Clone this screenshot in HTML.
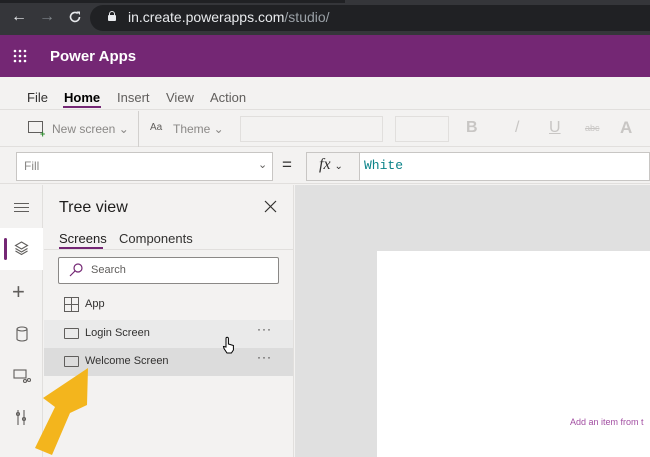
<!DOCTYPE html>
<html><head><style>
*{box-sizing:border-box;margin:0;padding:0}
body{width:650px;height:457px;overflow:hidden;position:relative;font-family:"Liberation Sans",sans-serif;background:#f3f2f1}
.a{position:absolute}
</style></head><body>
<div class="a" style="left:0;top:0;width:650px;height:35px;background:#35363a"></div>
<div class="a" style="left:0;top:0;width:345px;height:3px;background:#202124"></div>
<div class="a" style="left:90px;top:5px;width:600px;height:26px;border-radius:13px;background:#202124"></div>
<div class="a" style="left:11px;top:8px;color:#e8eaed;font-size:16px">&#8592;</div>
<div class="a" style="left:39px;top:8px;color:#80868b;font-size:16px">&#8594;</div>
<svg class="a" style="left:68px;top:10px" width="14" height="14" viewBox="0 0 14 14"><path d="M11.5 7A4.5 4.5 0 1 1 9.8 3.4" fill="none" stroke="#e8eaed" stroke-width="1.6"/><path d="M8.5 1.5h3.5v3.5z" fill="#e8eaed"/></svg>
<div class="a" style="left:108px;top:15px;width:8px;height:6px;background:#e8eaed;border-radius:1px"></div>
<div class="a" style="left:109px;top:11px;width:6px;height:6px;border:1.5px solid #e8eaed;border-radius:3px 3px 0 0"></div>
<div class="a" style="left:128px;top:9px;color:#e8eaed;font-size:14px">in.create.powerapps.com<span style="color:#9aa0a6">/studio/</span></div>
<div class="a" style="left:0;top:35px;width:650px;height:42px;background:#742774"></div>
<svg class="a" style="left:13px;top:49px" width="16" height="14"><g fill="#fff"><circle cx="2" cy="2" r="1.3"/><circle cx="7" cy="2" r="1.3"/><circle cx="12" cy="2" r="1.3"/><circle cx="2" cy="7" r="1.3"/><circle cx="7" cy="7" r="1.3"/><circle cx="12" cy="7" r="1.3"/><circle cx="2" cy="12" r="1.3"/><circle cx="7" cy="12" r="1.3"/><circle cx="12" cy="12" r="1.3"/></g></svg>
<div class="a" style="left:50px;top:48px;color:#fff;font-size:15px;font-weight:bold">Power Apps</div>
<div class="a" style="left:0;top:77px;width:650px;height:33px;background:#f3f2f1;border-bottom:1px solid #e1dfdd"></div>
<div class="a" style="top:90px;left:27px;font-size:13px;color:#323130">File</div>
<div class="a" style="top:90px;left:64px;font-size:13px;color:#000;font-weight:bold">Home</div>
<div class="a" style="top:106px;left:63px;width:38px;height:2px;background:#742774"></div>
<div class="a" style="top:90px;left:117px;font-size:13px;color:#605e5c">Insert</div>
<div class="a" style="top:90px;left:166px;font-size:13px;color:#605e5c">View</div>
<div class="a" style="top:90px;left:210px;font-size:13px;color:#605e5c">Action</div>
<div class="a" style="left:0;top:111px;width:650px;height:36px;background:#f3f2f1;border-bottom:1px solid #e1dfdd"></div>
<div class="a" style="left:28px;top:121px;width:15px;height:12px;border:1.3px solid #605e5c"></div>
<div class="a" style="left:40px;top:129px;color:#2c8b2c;font-size:9px;font-weight:bold">+</div>
<div class="a" style="left:52px;top:122px;font-size:12px;color:#8a8886">New screen ⌄</div>
<div class="a" style="left:138px;top:111px;width:1px;height:36px;background:#d2d0ce"></div>
<div class="a" style="left:150px;top:122px;font-size:10px;color:#605e5c">Aa</div>
<div class="a" style="left:173px;top:122px;font-size:12px;color:#8a8886">Theme ⌄</div>
<div class="a" style="left:240px;top:116px;width:143px;height:26px;border:1px solid #e1dfdd;background:#f3f2f1"></div>
<div class="a" style="left:395px;top:116px;width:54px;height:26px;border:1px solid #e1dfdd"></div>
<div class="a" style="left:466px;top:119px;font-size:16px;color:#c8c6c4;font-weight:bold">B</div>
<div class="a" style="left:515px;top:119px;font-size:16px;color:#c8c6c4">/</div>
<div class="a" style="left:549px;top:119px;font-size:16px;color:#c8c6c4;text-decoration:underline">U</div>
<div class="a" style="left:585px;top:123px;font-size:9px;color:#c8c6c4;text-decoration:line-through">abc</div>
<div class="a" style="left:620px;top:118px;font-size:17px;color:#c8c6c4;font-weight:bold">A</div>
<div class="a" style="left:0;top:148px;width:650px;height:36px;background:#f3f2f1;border-bottom:1px solid #e1dfdd"></div>
<div class="a" style="left:16px;top:152px;width:257px;height:29px;background:#fff;border:1px solid #c8c6c4"></div>
<div class="a" style="left:24px;top:159px;font-size:12px;color:#8a8886">Fill</div>
<div class="a" style="left:258px;top:158px;font-size:11px;color:#605e5c">⌄</div>
<div class="a" style="left:282px;top:155px;font-size:17px;color:#323130">=</div>
<div class="a" style="left:306px;top:152px;width:344px;height:29px;background:#fff;border:1px solid #c8c6c4"></div>
<div class="a" style="left:306px;top:152px;width:54px;height:29px;background:#f3f2f1;border:1px solid #c8c6c4"></div>
<div class="a" style="left:319px;top:156px;font-size:16px;font-style:italic;font-family:'Liberation Serif',serif;color:#323130">fx <span style="font-size:10px;font-style:normal">⌄</span></div>
<div class="a" style="left:364px;top:158px;font-size:13px;font-family:'Liberation Mono',monospace;color:#0b8389">White</div>
<div class="a" style="left:0;top:185px;width:43px;height:272px;background:#f3f2f1;border-right:1px solid #e1dfdd"></div>
<div class="a" style="left:14px;top:203px;width:15px;height:9px;border-top:1.3px solid #605e5c;border-bottom:1.3px solid #605e5c"></div>
<div class="a" style="left:14px;top:207px;width:15px;height:1.3px;background:#605e5c"></div>
<div class="a" style="left:0;top:228px;width:43px;height:42px;background:#fff"></div>
<div class="a" style="left:4px;top:238px;width:3px;height:22px;background:#742774;border-radius:2px"></div>
<svg class="a" style="left:14px;top:241px" width="15" height="15"><g fill="none" stroke="#605e5c" stroke-width="1.1"><path d="M7.5 1L13.5 4.5 7.5 8 1.5 4.5z"/><path d="M1.5 7.5L7.5 11 13.5 7.5"/><path d="M1.5 10L7.5 13.5 13.5 10"/></g></svg>
<div class="a" style="left:12px;top:279px;font-size:22px;color:#605e5c;font-weight:300">+</div>
<svg class="a" style="left:16px;top:326px" width="12" height="16"><g fill="none" stroke="#605e5c" stroke-width="1.1"><ellipse cx="6" cy="3" rx="5" ry="2"/><path d="M1 3v10a5 2 0 0 0 10 0V3"/></g></svg>
<svg class="a" style="left:13px;top:368px" width="18" height="16"><g fill="none" stroke="#605e5c" stroke-width="1.1"><rect x="1" y="2" width="12" height="8"/><circle cx="12" cy="13" r="1.5"/><circle cx="16" cy="12" r="1.5"/></g></svg>
<svg class="a" style="left:15px;top:409px" width="12" height="17"><g fill="none" stroke="#605e5c" stroke-width="1.1"><path d="M3 1v15M9 1v15"/><circle cx="3" cy="5" r="1.5"/><circle cx="9" cy="10" r="1.5"/></g></svg>
<div class="a" style="left:44px;top:185px;width:250px;height:272px;background:#f3f2f1;border-right:1px solid #e1dfdd"></div>
<div class="a" style="left:59px;top:199px;font-size:16px;color:#201f1e">Tree view</div>
<svg class="a" style="left:264px;top:200px" width="13" height="13"><path d="M1 1L12 12M12 1L1 12" stroke="#323130" stroke-width="1.2"/></svg>
<div class="a" style="left:59px;top:231px;font-size:13px;color:#201f1e">Screens</div>
<div class="a" style="left:59px;top:247px;width:44px;height:2px;background:#742774"></div>
<div class="a" style="left:119px;top:231px;font-size:13px;color:#323130">Components</div>
<div class="a" style="left:44px;top:249px;width:250px;height:1px;background:#e1dfdd"></div>
<div class="a" style="left:58px;top:257px;width:221px;height:27px;background:#fff;border:1px solid #8a8886;border-radius:2px"></div>
<svg class="a" style="left:69px;top:263px" width="14" height="14"><g fill="none" stroke="#742774" stroke-width="1.2"><circle cx="9" cy="5" r="4"/><path d="M6 8L1 13"/></g></svg>
<div class="a" style="left:91px;top:264px;font-size:11px;color:#605e5c">Search</div>
<svg class="a" style="left:64px;top:297px" width="15" height="15"><g fill="none" stroke="#605e5c" stroke-width="1"><rect x=".5" y=".5" width="14" height="14"/><path d="M7.5 .5v14M.5 7.5h14"/></g></svg>
<div class="a" style="left:85px;top:298px;font-size:11px;color:#323130">App</div>
<div class="a" style="left:44px;top:320px;width:249px;height:28px;background:#eaeaea"></div>
<div class="a" style="left:44px;top:348px;width:249px;height:28px;background:#dcdcdc"></div>
<div class="a" style="left:64px;top:328px;width:15px;height:11px;border:1.2px solid #605e5c;border-radius:1px"></div>
<div class="a" style="left:85px;top:327px;font-size:11px;color:#323130">Login Screen</div>
<div class="a" style="left:257px;top:322px;font-size:12px;color:#323130;letter-spacing:1px">···</div>
<div class="a" style="left:64px;top:356px;width:15px;height:11px;border:1.2px solid #605e5c;border-radius:1px"></div>
<div class="a" style="left:85px;top:355px;font-size:11px;color:#323130">Welcome Screen</div>
<div class="a" style="left:257px;top:350px;font-size:12px;color:#323130;letter-spacing:1px">···</div>
<svg class="a" style="left:222px;top:336px" width="14" height="18"><path d="M4 10V2.5a1.2 1.2 0 0 1 2.4 0V8l5 1.5V14l-2 3H5L2 12.5 1.5 10.5 4 11z" fill="#fff" stroke="#000" stroke-width="1"/></svg>
<svg class="a" style="left:0;top:0" width="650" height="457"><path d="M88 368L87 405 70 413 52 455 35 448 55 407 43 398z" fill="#f3b51d"/></svg>
<div class="a" style="left:295px;top:185px;width:355px;height:272px;background:#e0e0e0"></div>
<div class="a" style="left:377px;top:251px;width:273px;height:206px;background:#fff"></div>
<div class="a" style="left:570px;top:417px;font-size:9px;color:#a24ea2;white-space:nowrap">Add an item from t</div>
</body></html>
